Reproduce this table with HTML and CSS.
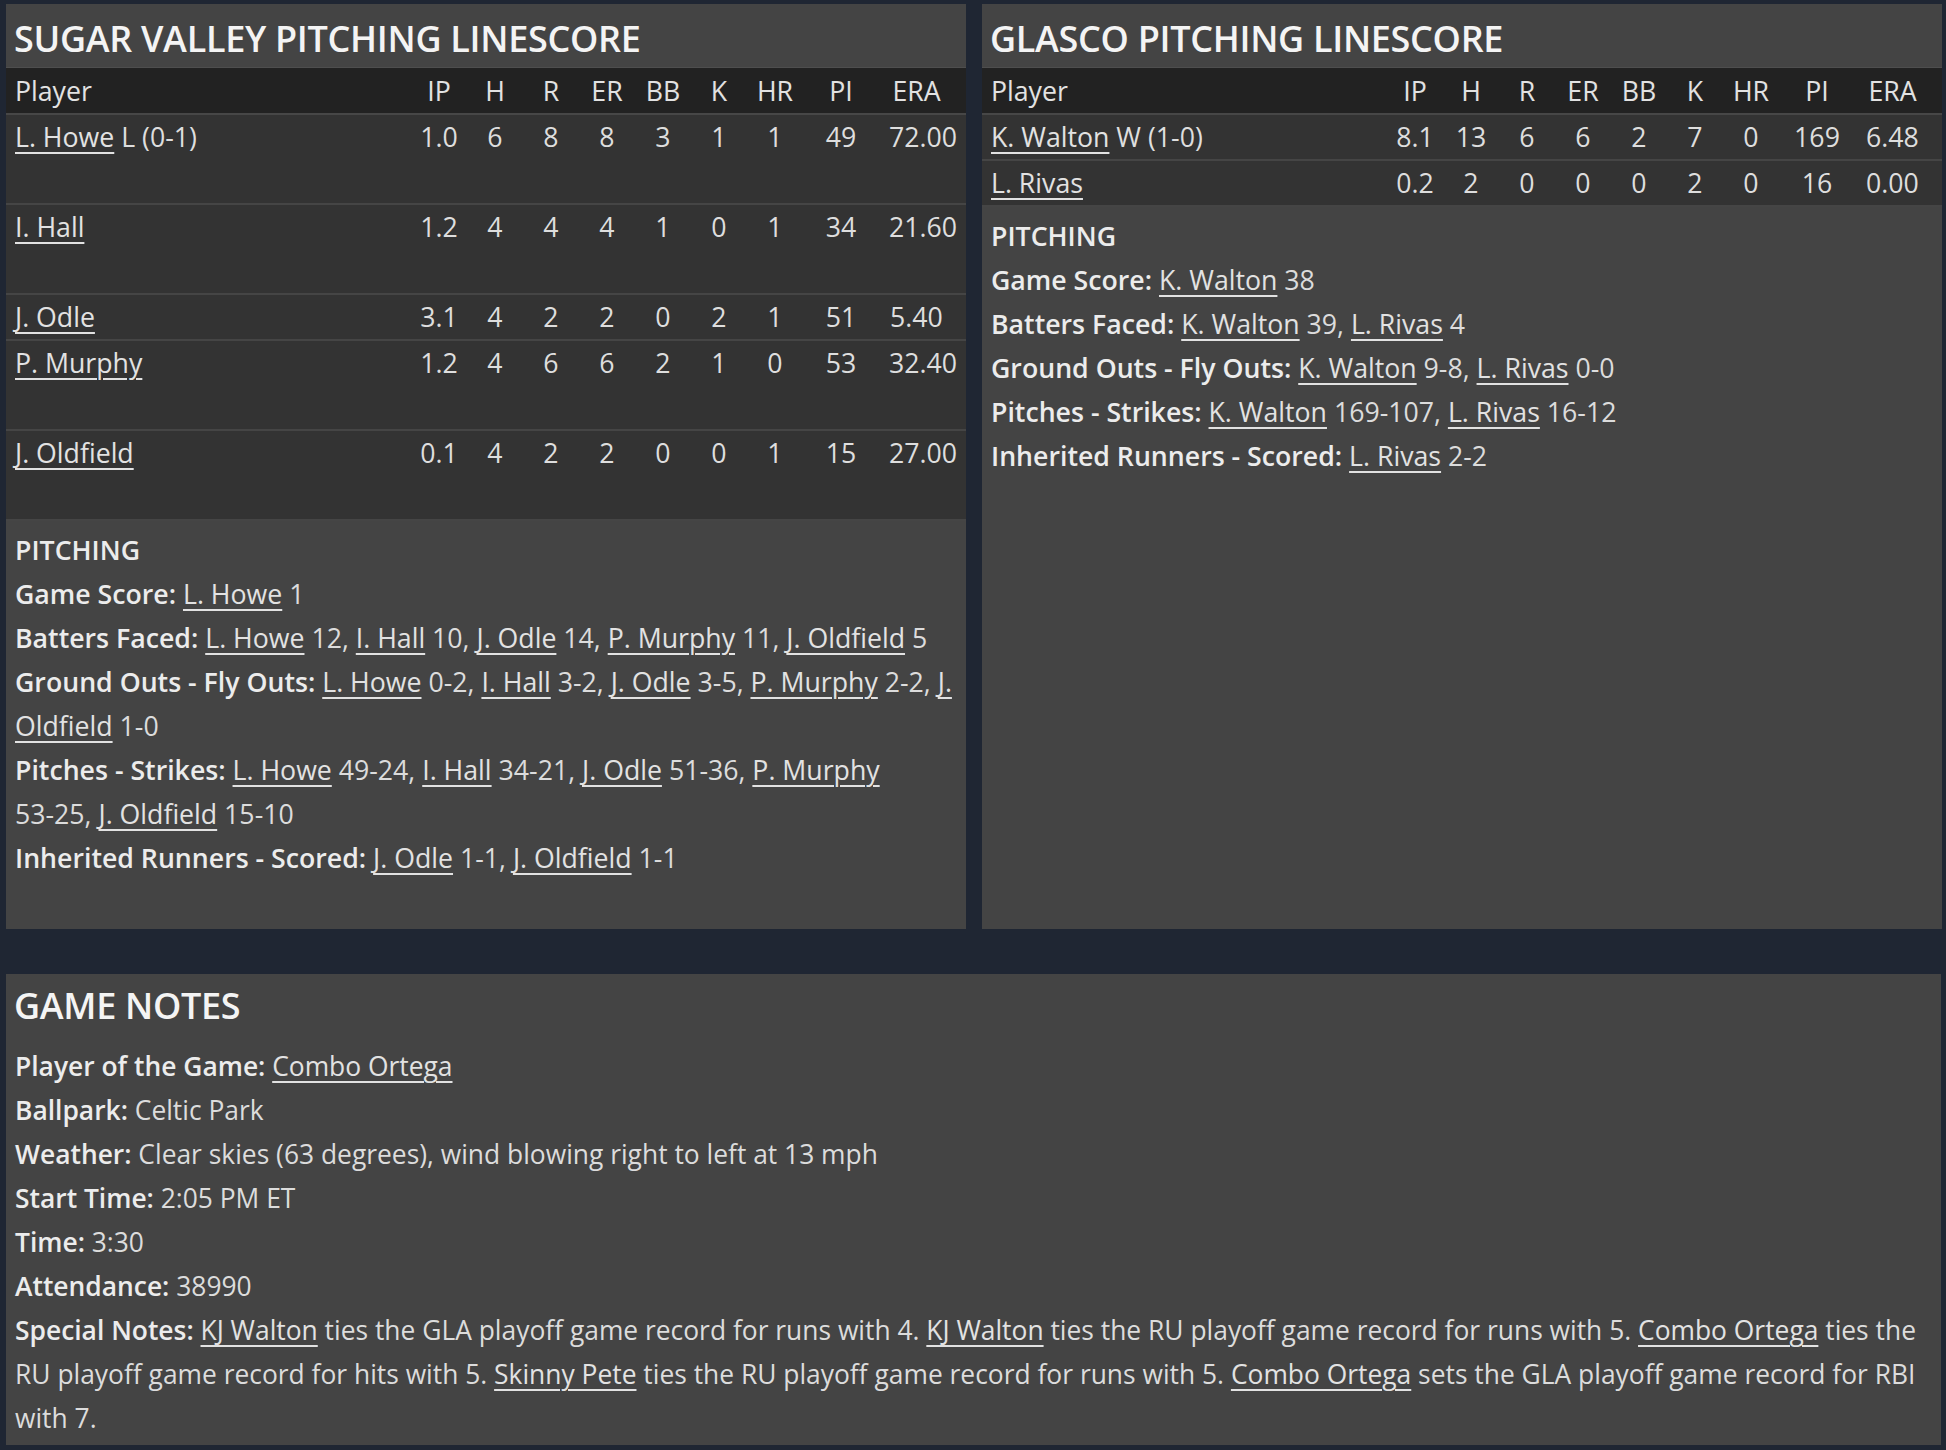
FILE: index.html
```html
<!DOCTYPE html>
<html lang="en">
<head>
<meta charset="utf-8">
<title>Pitching Linescore</title>
<link rel="stylesheet" href="styles.css">
</head>
<body>
<div class="top">
  <section class="panel">
    <h2 class="panel-title">SUGAR VALLEY PITCHING LINESCORE</h2>
    <table class="lines">
      <colgroup>
        <col class="c-player"><col class="c-num"><col class="c-num"><col class="c-num"><col class="c-num"><col class="c-num"><col class="c-num"><col class="c-num"><col class="c-pi"><col class="c-era">
      </colgroup>
      <thead>
        <tr><th class="name">Player</th><th>IP</th><th>H</th><th>R</th><th>ER</th><th>BB</th><th>K</th><th>HR</th><th>PI</th><th class="era">ERA</th></tr>
      </thead>
      <tbody>
        <tr class="tall"><td class="name"><a href="#">L. Howe</a> L (0-1)</td><td>1.0</td><td>6</td><td>8</td><td>8</td><td>3</td><td>1</td><td>1</td><td>49</td><td class="era">72.00</td></tr>
        <tr class="tall"><td class="name"><a href="#">I. Hall</a></td><td>1.2</td><td>4</td><td>4</td><td>4</td><td>1</td><td>0</td><td>1</td><td>34</td><td class="era">21.60</td></tr>
        <tr><td class="name"><a href="#">J. Odle</a></td><td>3.1</td><td>4</td><td>2</td><td>2</td><td>0</td><td>2</td><td>1</td><td>51</td><td class="era">5.40</td></tr>
        <tr class="tall"><td class="name"><a href="#">P. Murphy</a></td><td>1.2</td><td>4</td><td>6</td><td>6</td><td>2</td><td>1</td><td>0</td><td>53</td><td class="era">32.40</td></tr>
        <tr class="tall"><td class="name"><a href="#">J. Oldfield</a></td><td>0.1</td><td>4</td><td>2</td><td>2</td><td>0</td><td>0</td><td>1</td><td>15</td><td class="era">27.00</td></tr>
      </tbody>
    </table>
    <div class="details">
      <p class="sub">PITCHING</p>
      <p><b>Game Score:</b> <a href="#">L. Howe</a> 1</p>
      <p><b>Batters Faced:</b> <a href="#">L. Howe</a> 12, <a href="#">I. Hall</a> 10, <a href="#">J. Odle</a> 14, <a href="#">P. Murphy</a> 11, <a href="#">J. Oldfield</a> 5</p>
      <p><b>Ground Outs - Fly Outs:</b> <a href="#">L. Howe</a> <span class="nb">0-2,</span> <a href="#">I. Hall</a> <span class="nb">3-2,</span> <a href="#">J. Odle</a> <span class="nb">3-5,</span> <a href="#">P. Murphy</a> <span class="nb">2-2,</span> <a href="#">J. Oldfield</a> <span class="nb">1-0</span></p>
      <p><b>Pitches - Strikes:</b> <a href="#">L. Howe</a> <span class="nb">49-24,</span> <a href="#">I. Hall</a> <span class="nb">34-21,</span> <a href="#">J. Odle</a> <span class="nb">51-36,</span> <a href="#">P. Murphy</a> <span class="nb">53-25,</span> <a href="#">J. Oldfield</a> <span class="nb">15-10</span></p>
      <p><b>Inherited Runners - Scored:</b> <a href="#">J. Odle</a> <span class="nb">1-1,</span> <a href="#">J. Oldfield</a> <span class="nb">1-1</span></p>
    </div>
  </section>
  <section class="panel">
    <h2 class="panel-title">GLASCO PITCHING LINESCORE</h2>
    <table class="lines">
      <colgroup>
        <col class="c-player"><col class="c-num"><col class="c-num"><col class="c-num"><col class="c-num"><col class="c-num"><col class="c-num"><col class="c-num"><col class="c-pi"><col class="c-era">
      </colgroup>
      <thead>
        <tr><th class="name">Player</th><th>IP</th><th>H</th><th>R</th><th>ER</th><th>BB</th><th>K</th><th>HR</th><th>PI</th><th class="era">ERA</th></tr>
      </thead>
      <tbody>
        <tr><td class="name"><a href="#">K. Walton</a> W (1-0)</td><td>8.1</td><td>13</td><td>6</td><td>6</td><td>2</td><td>7</td><td>0</td><td>169</td><td class="era">6.48</td></tr>
        <tr><td class="name"><a href="#">L. Rivas</a></td><td>0.2</td><td>2</td><td>0</td><td>0</td><td>0</td><td>2</td><td>0</td><td>16</td><td class="era">0.00</td></tr>
      </tbody>
    </table>
    <div class="details">
      <p class="sub">PITCHING</p>
      <p><b>Game Score:</b> <a href="#">K. Walton</a> 38</p>
      <p><b>Batters Faced:</b> <a href="#">K. Walton</a> 39, <a href="#">L. Rivas</a> 4</p>
      <p><b>Ground Outs - Fly Outs:</b> <a href="#">K. Walton</a> <span class="nb">9-8,</span> <a href="#">L. Rivas</a> <span class="nb">0-0</span></p>
      <p><b>Pitches - Strikes:</b> <a href="#">K. Walton</a> <span class="nb">169-107,</span> <a href="#">L. Rivas</a> <span class="nb">16-12</span></p>
      <p><b>Inherited Runners - Scored:</b> <a href="#">L. Rivas</a> <span class="nb">2-2</span></p>
    </div>
  </section>
</div>
<section class="notes">
  <h2 class="panel-title notes-title">GAME NOTES</h2>
  <div class="notes-body">
    <p><b>Player of the Game:</b> <a href="#">Combo Ortega</a></p>
    <p><b>Ballpark:</b> Celtic Park</p>
    <p><b>Weather:</b> Clear skies (63 degrees), wind blowing right to left at 13 mph</p>
    <p><b>Start Time:</b> 2:05 PM ET</p>
    <p><b>Time:</b> 3:30</p>
    <p><b>Attendance:</b> 38990</p>
    <p><b>Special Notes:</b> <a href="#">KJ Walton</a> ties the GLA playoff game record for runs with 4. <a href="#">KJ Walton</a> ties the RU playoff game record for runs with 5. <a href="#">Combo Ortega</a> ties the RU playoff game record for hits with 5. <a href="#">Skinny Pete</a> ties the RU playoff game record for runs with 5. <a href="#">Combo Ortega</a> sets the GLA playoff game record for RBI with 7.</p>
  </div>
</section>
</body>
</html>
```
FILE: styles.css
```css
html, body {
  margin: 0;
  background: #1f2633;
}
body {
  padding: 4px 5px 0 6px;
  font-family: "Open Sans", "Noto Sans", sans-serif;
  font-size: 26.7px;
  color: #dcdcdc;
  min-height: 1450px;
  box-sizing: border-box;
}
p { margin: 0; }
a {
  color: #e2e2e2;
  text-decoration: underline;
  text-decoration-thickness: 2px;
  text-underline-offset: 5px;
}
b { font-weight: 600; color: #ececec; }
.nb { white-space: nowrap; }

.top {
  display: grid;
  grid-template-columns: 1fr 1fr;
  gap: 16px;
}
.panel {
  display: flex;
  flex-direction: column;
  background: #444;
}
.panel-title {
  margin: 0;
  padding: 17px 9px 10px 8px;
  font-size: 36px;
  line-height: 1;
  font-weight: 600;
  letter-spacing: -0.3px;
  color: #f4f4f4;
  background: #444;
  border-bottom: 1px solid #4e4e4e;
}

.lines {
  width: 100%;
  border-collapse: collapse;
  table-layout: fixed;
  background: #333;
}
.c-player { width: 405px; }
.c-num { width: 56px; }
.c-pi { width: 76px; }
.c-era { width: 87px; }

.lines th, .lines td {
  padding: 0;
  text-align: center;
  vertical-align: top;
  white-space: nowrap;
  line-height: 44px;
  height: 44px;
  font-weight: 400;
}
.lines th {
  background: #222;
  padding-top: 1px;
  height: 44px;
  color: #e2e2e2;
  border-bottom: 2px solid #474747;
}
.lines td {
  border-bottom: 2px solid #454545;
  color: #dedede;
}
.lines .tall td { height: 88px; }
.lines .name {
  text-align: left;
  padding-left: 9px;
}
.lines .era {
  text-align: center;
  padding-left: 10px;
  padding-right: 22px;
  overflow: visible;
}

.details {
  flex: 1;
  background: #444;
  padding: 7px 9px 49px 9px;
  line-height: 44px;
}
.sub {
  font-weight: 600;
  color: #ececec;
}

.notes {
  margin-top: 45px;
  background: #444;
}
.notes-title {
  padding-top: 14px;
  border-bottom: 0;
}
.notes-body {
  padding: 10px 10px 5px 9px;
  line-height: 44px;
  font-size: 26.4px;
}
```
